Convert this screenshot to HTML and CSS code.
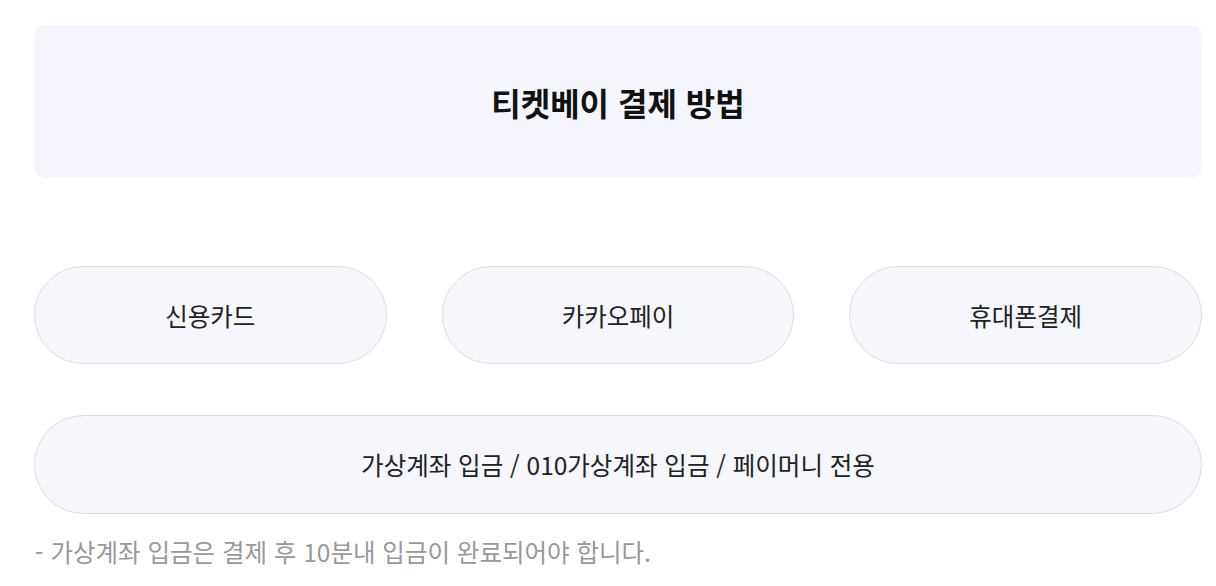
FILE: index.html
```html
<!DOCTYPE html>
<html lang="ko">
<head>
<meta charset="utf-8">
<link rel="stylesheet" href="styles.css">
</head>
<body>
<main class="page">
  <header class="title-box">
    <h1 class="title">티켓베이 결제 방법</h1>
  </header>
  <section class="methods">
    <div class="method-row">
      <button class="method">신용카드</button>
      <button class="method">카카오페이</button>
      <button class="method">휴대폰결제</button>
    </div>
    <button class="method method-wide">가상계좌 입금 / 010가상계좌 입금 / 페이머니 전용</button>
  </section>
  <p class="note">- 가상계좌 입금은 결제 후 10분내 입금이 완료되어야 합니다.</p>
</main>
</body>
</html>
```
FILE: styles.css
```css
html, body {
  margin: 0;
  padding: 0;
  background: #ffffff;
}
body {
  font-family: "Noto Sans CJK KR", "Noto Sans", sans-serif;
  color: #222;
}
.page {
  padding: 25px 14px 0 34px;
  box-sizing: border-box;
  width: 1216px;
}
.title-box {
  background: #f5f6fd;
  border-radius: 10px;
  height: 153px;
  display: flex;
  align-items: center;
  justify-content: center;
}
.title {
  margin: 0;
  font-size: 32px;
  font-weight: 700;
  color: #111;
  line-height: 1;
}
.methods {
  margin-top: 88px;
  display: flex;
  flex-direction: column;
  gap: 51px;
}
.method-row {
  display: grid;
  grid-template-columns: repeat(3, 1fr);
  column-gap: 55px;
}
.method {
  font-family: inherit;
  height: 98px;
  border-radius: 49px;
  border: 1px solid #dcdde2;
  background: #f5f7fc;
  font-size: 24.5px;
  color: #222;
  padding: 0;
  margin: 0;
}
.method-wide {
  width: 100%;
  height: 99px;
  border-radius: 50px;
}
.note {
  margin: 20px 0 0 1px;
  font-size: 24.5px;
  line-height: 36px;
  color: #999;
}
```
